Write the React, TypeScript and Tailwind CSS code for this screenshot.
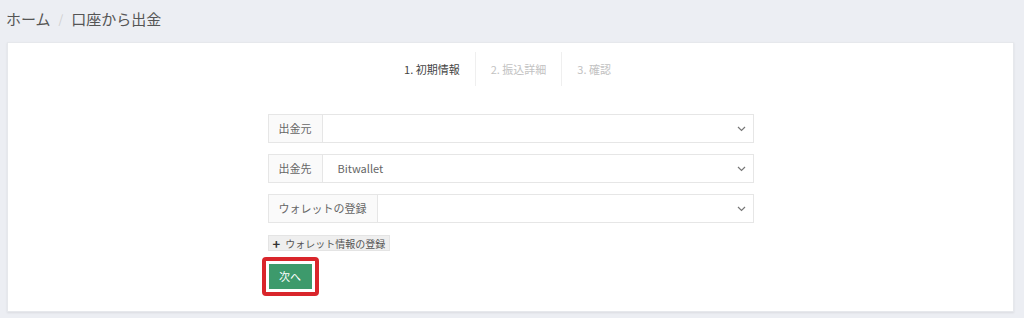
import React from "react";

const font = { fontFamily: '"Noto Sans CJK JP", "Noto Sans", sans-serif' };

function Chevron() {
  return (
    <svg width="9" height="6" viewBox="0 0 9 6" className="shrink-0">
      <path d="M1 1l3.5 3.5L8 1" fill="none" stroke="#777" strokeWidth="1.2" />
    </svg>
  );
}

function Row({ label, value }: { label: string; value?: string }) {
  return (
    <div className="flex h-[29px] border border-[#e6e6e6] bg-white">
      <div className="flex items-center px-[10px] bg-[#fafafa] border-r border-[#e6e6e6] text-[11px] text-[#666]">
        {label}
      </div>
      <div className="flex flex-1 items-center justify-between pl-[15px] pr-[7px] text-[11px] text-[#666]">
        <span>{value ?? ""}</span>
        <Chevron />
      </div>
    </div>
  );
}

export default function App() {
  return (
    <div className="w-[1024px] h-[318px] bg-[#eceef3] overflow-hidden" style={font}>
      <div className="h-[42px] pl-[6px] pt-[8px] flex items-start text-[15px] text-[#555] leading-[22px]">
        <span>ホーム</span>
        <span className="mx-[8px] text-[#cfcfcf] text-[12px]">/</span>
        <span>口座から出金</span>
      </div>
      <div className="ml-[7px] w-[1007px] h-[270px] bg-white border border-[#e6e8ec] shadow-[0_1px_2px_rgba(0,0,0,0.08)]">
        <div className="flex justify-center pt-[9px] pr-[6px]">
          <div className="flex items-center h-[34px] px-[15px] text-[11px] text-[#444]">1. 初期情報</div>
          <div className="flex items-center h-[34px] px-[15px] text-[11px] text-[#c2c2c2] border-l border-[#efefef]">2. 振込詳細</div>
          <div className="flex items-center h-[34px] px-[15px] text-[11px] text-[#c2c2c2] border-l border-[#efefef]">3. 確認</div>
        </div>
        <div className="mx-auto mt-[28px] w-[486px] flex flex-col gap-[11px]">
          <Row label="出金元" />
          <Row label="出金先" value="Bitwallet" />
          <Row label="ウォレットの登録" />
        </div>
        <div className="mx-auto w-[486px] mt-[12px] flex flex-col items-start">
          <div className="flex items-center h-[16px] px-[4px] bg-[#efefef] border border-[#e4e4e4] text-[10px] text-[#555]">
            <span className="text-[13px] font-bold mr-[5px] leading-none text-[#333]">+</span>
            ウォレット情報の登録
          </div>
          <div className="mt-[6px] -ml-[6px] flex p-[3px] border-[4px] border-[#d9252b] rounded-[4px]">
            <div className="w-[43px] h-[25px] bg-[#3d9a6c] text-white text-[11px] flex items-center justify-center">
              次へ
            </div>
          </div>
        </div>
      </div>
    </div>
  );
}
